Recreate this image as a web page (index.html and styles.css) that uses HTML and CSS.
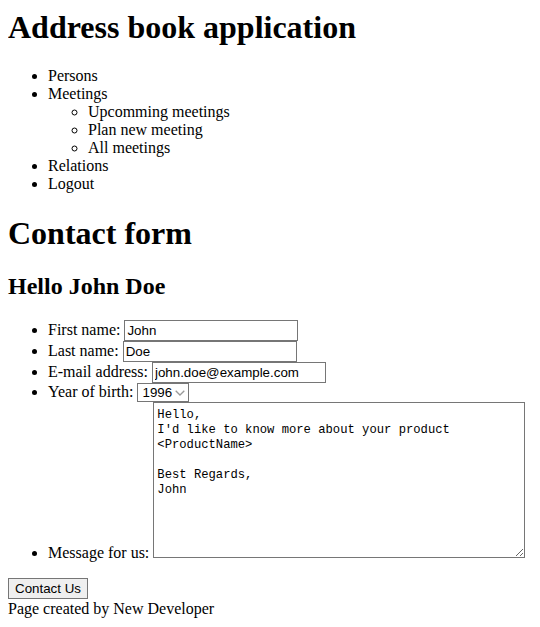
FILE: index.html
```html
<!DOCTYPE html>
<html>
<head>
<meta charset="utf-8">
<title>Contact form</title>
<link rel="stylesheet" href="styles.css">
</head>
<body class="page">
<h1 class="title top">Address book application</h1>
<ul class="list">
  <li>Persons</li>
  <li>Meetings
    <ul class="sublist">
      <li>Upcomming meetings</li>
      <li>Plan new meeting</li>
      <li>All meetings</li>
    </ul>
  </li>
  <li>Relations</li>
  <li>Logout</li>
</ul>
<h1 class="title">Contact form</h1>
<h2 class="subtitle">Hello John Doe</h2>
<form class="form">
<ul class="list">
  <li>First name: <input class="field" type="text" value="John"></li>
  <li>Last name: <input class="field" type="text" value="Doe"></li>
  <li>E-mail address: <input class="field" type="text" value="john.doe@example.com"></li>
  <li>Year of birth: <select class="year"><option>1996</option></select></li>
  <li>Message for us: <textarea class="message">Hello,
I'd like to know more about your product
&lt;ProductName&gt;

Best Regards,
John</textarea></li>
</ul>
<button class="btn" type="button">Contact Us</button>
</form>
<div class="footer">Page created by New Developer</div>
</body>
</html>
```
FILE: styles.css
```css
.page {
  margin: 8px;
  padding-top: 1px;
  font-family: "Liberation Serif", "Times New Roman", serif;
  font-size: 16px;
  line-height: 18px;
  color: #000;
  background: #fff;
}
.title {
  font-size: 32px;
  line-height: 37px;
  margin: 0.67em 0;
}
.top {
  margin-top: 0;
}
.subtitle {
  font-size: 24px;
  line-height: 27px;
  margin: 0.83em 0;
}
.list {
  margin: 16px 0;
  padding-left: 40px;
}
.sublist {
  margin: 0;
  padding-left: 40px;
  list-style-type: circle;
}
.form {
  margin: 0;
}
.field {
  box-sizing: border-box;
  font-family: "Liberation Sans", Arial, sans-serif;
  font-size: 13.33px;
  line-height: normal;
  width: 174px;
  height: 21px;
  padding: 1px 2px;
  border: 1px solid #767676;
  border-radius: 0;
  color: #000;
}
.year {
  appearance: none;
  -webkit-appearance: none;
  box-sizing: border-box;
  font-family: "Liberation Sans", Arial, sans-serif;
  font-size: 13.33px;
  line-height: normal;
  width: 52px;
  height: 19px;
  padding: 0 0 0 4px;
  border: 1px solid #767676;
  border-radius: 0;
  color: #000;
  background: #fff url("data:image/svg+xml,%3Csvg xmlns='http://www.w3.org/2000/svg' width='10' height='6' viewBox='0 0 10 6'%3E%3Cpath d='M0.7 0.7l4.3 4.3 4.3-4.3' fill='none' stroke='%23999' stroke-width='1.3'/%3E%3C/svg%3E") no-repeat right 3px center;
}
.message {
  box-sizing: border-box;
  font-family: "Liberation Mono", "Courier New", monospace;
  font-size: 12.2px;
  line-height: 15px;
  width: 372px;
  height: 156px;
  padding: 5px 3px 1px;
  border: 1px solid #767676;
  color: #000;
}
.btn {
  box-sizing: border-box;
  font-family: "Liberation Sans", Arial, sans-serif;
  font-size: 13.33px;
  line-height: normal;
  width: 80px;
  height: 21px;
  padding: 1px 6px;
  border: 1px solid #767676;
  border-radius: 0;
  background: #efefef;
  color: #000;
}
.footer {
  margin-top: 1px;
}
```
